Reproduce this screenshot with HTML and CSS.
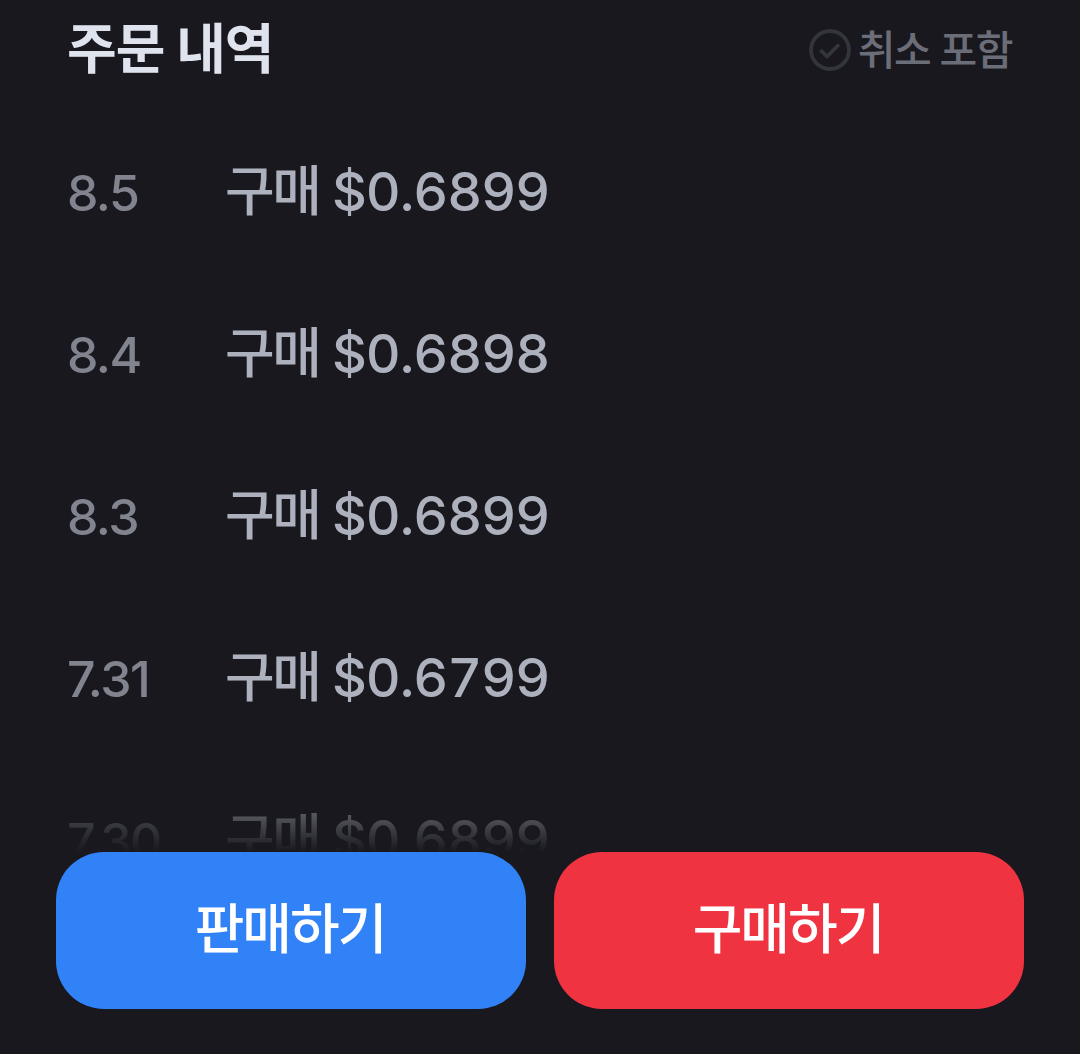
FILE: index.html
```html
<!DOCTYPE html>
<html lang="ko">
<head>
<meta charset="utf-8">
<title>주문 내역</title>
<link rel="stylesheet" href="styles.css">
</head>
<body>
<main class="screen">
  <header class="head">
    <h1 class="title">주문 내역</h1>
    <div class="cancel">
      <svg class="check" viewBox="0 0 42 42" width="42" height="42" fill="none" aria-hidden="true">
        <circle cx="21" cy="21" r="19" stroke="#33353d" stroke-width="3.8"/>
        <path d="M11.500 21L18 27.500L30 15.500" stroke="#33353d" stroke-width="3.8"/>
      </svg>
      <span class="cancel-label">취소 포함</span>
    </div>
  </header>
  <section class="list">
    <div class="row"><span class="date">8.5</span><span class="price"><span class="kind">구매</span> $0.6899</span></div>
    <div class="row"><span class="date">8.4</span><span class="price"><span class="kind">구매</span> $0.6898</span></div>
    <div class="row"><span class="date">8.3</span><span class="price"><span class="kind">구매</span> $0.6899</span></div>
    <div class="row"><span class="date">7.31</span><span class="price"><span class="kind">구매</span> $0.6799</span></div>
    <div class="row"><span class="date">7.30</span><span class="price"><span class="kind">구매</span> $0.6899</span></div>
    <div class="fade"></div>
  </section>
  <footer class="actions">
    <button class="btn sell">판매하기</button>
    <button class="btn buy">구매하기</button>
  </footer>
</main>
</body>
</html>
```

FILE: styles.css
```css
* { box-sizing: border-box; margin: 0; padding: 0; }
html, body { background: #18181e; }
body { width: 1080px; height: 1054px; overflow: hidden; font-family: Inter, "Noto Sans CJK KR", sans-serif; }
.screen { width: 1080px; height: 1054px; display: flex; flex-direction: column; overflow: hidden; }
.head { height: 100px; padding: 0 68px 0 67px; display: flex; align-items: center; justify-content: space-between; flex: none; }
.title { font-size: 54px; font-weight: 700; line-height: 100px; color: #dfe3ee; letter-spacing: -1px; }
.cancel { display: flex; align-items: center; gap: 7px; font-size: 41px; font-weight: 500; color: #6b6e78; letter-spacing: -1.5px; }
.cancel-label { padding-bottom: 6px; }
.check { display: block; flex: none; }
.list { position: relative; height: 752px; flex: none; overflow: hidden; }
.row { height: 162px; padding: 48px 68px 0 67px; display: flex; align-items: baseline; }
.date { width: 158px; flex: none; font-size: 50px; font-weight: 500; color: #81848e; letter-spacing: -1.5px; }
.price { font-size: 54px; font-weight: 500; color: #adb1bd; font-variant-numeric: tabular-nums; letter-spacing: -1px; word-spacing: -1px; }
.kind { letter-spacing: -2.5px; }
.fade { position: absolute; left: 0; right: 0; bottom: 0; height: 46px; background: linear-gradient(to bottom, rgba(24,24,30,0.5), #18181e); }
.actions { display: flex; gap: 28px; padding: 0 56px; flex: none; }
.btn { flex: 1; height: 157px; border: 0; border-radius: 48px; padding: 0 2px 10px 0; font: 500 54px Inter, "Noto Sans CJK KR", sans-serif; color: #fff; letter-spacing: -2px; }
.sell { background: #3182f6; }
.buy { background: #f03341; }
```
